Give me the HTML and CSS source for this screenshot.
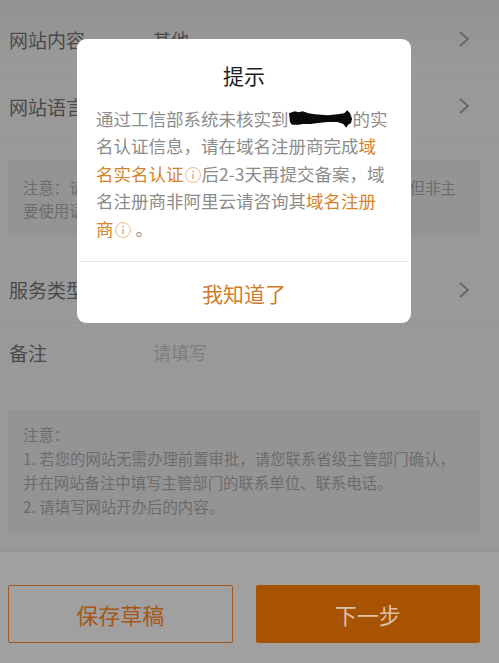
FILE: index.html
```html
<!DOCTYPE html>
<html lang="zh">
<head>
<meta charset="utf-8">
<title>提示</title>
<link rel="stylesheet" href="styles.css">
</head>
<body>
<div class="page">
  <main class="form">
    <div class="row row-first">
      <span class="label">网站内容</span><span class="value">其他</span>
      <svg class="chev" viewBox="0 0 12 18"><path d="M2 2l8 7-8 7"/></svg>
    </div>
    <div class="row">
      <span class="label">网站语言</span><span class="value"></span>
      <svg class="chev" viewBox="0 0 12 18"><path d="M2 2l8 7-8 7"/></svg>
    </div>
    <div class="note note-top">
      <p class="note-line"><span>注意：请</span><span>但非主</span></p>
      <p>要使用语</p>
    </div>
    <div class="row row-service">
      <span class="label">服务类型</span><span class="value"></span>
      <svg class="chev" viewBox="0 0 12 18"><path d="M2 2l8 7-8 7"/></svg>
    </div>
    <div class="row row-remark">
      <span class="label">备注</span><span class="value placeholder">请填写</span>
    </div>
    <div class="note note-bottom">
      <p>注意：</p>
      <p>1. 若您的网站无需办理前置审批，请您联系省级主管部门确认，</p>
      <p>并在网站备注中填写主管部门的联系单位、联系电话。</p>
      <p>2. 请填写网站开办后的内容。</p>
    </div>
  </main>
  <footer class="footer">
    <button class="btn btn-outline">保存草稿</button>
    <button class="btn btn-solid">下一步</button>
  </footer>
  <div class="dialog">
    <h1 class="dialog-title">提示</h1>
    <div class="dialog-body">
      <p class="line">通过工信部系统未核实到<svg class="scribble" viewBox="0 0 66 20"><path d="M0 3L6 1l4 1 4-1 6 2 7 1 13 1 10-1 7-1 3-3 3 3 2 6-1 4-3 2-2 3-3-4-6-2-10 0-10 1-8 1-8 0-4 1-7 0-2-3z"/></svg>的实</p>
      <p class="line">名认证信息，请在域名注册商完成<a class="link">域</a></p>
      <p class="line"><a class="link">名实名认证</a><svg class="info" viewBox="0 0 16 16"><circle cx="8" cy="8" r="7.4"/><path d="M8 7v5M8 3.8v1.6"/></svg>后2-3天再提交备案，域</p>
      <p class="line">名注册商非阿里云请咨询其<a class="link">域名注册</a></p>
      <p class="line"><a class="link">商</a><svg class="info" viewBox="0 0 16 16"><circle cx="8" cy="8" r="7.4"/><path d="M8 7v5M8 3.8v1.6"/></svg> 。</p>
    </div>
    <button class="dialog-action">我知道了</button>
  </div>
</div>
</body>
</html>
```
FILE: styles.css
```css
* { box-sizing: border-box; }
html, body { margin: 0; padding: 0; }
body {
  font-family: "Noto Sans CJK SC", "Liberation Sans", sans-serif;
  background: #9b9b9b;
}
p, h1 { margin: 0; font-weight: 400; }
.page {
  position: relative;
  width: 499px;
  height: 663px;
  overflow: hidden;
  display: flex;
  flex-direction: column;
  background: linear-gradient(#929292, #999 60px, #999);
}
.form { flex: 1; display: flex; flex-direction: column; }
.row {
  display: flex;
  align-items: center;
  height: 67px;
  padding: 0 29px 0 9px;
  border-bottom: 1px solid #959595;
  color: #4a4a4a;
  font-size: 19px;
}
.row-first { margin-top: 6px; }
.row-service { height: 66px; margin-top: 22px; }
.row-remark { height: 62px; padding-bottom: 4px; border-bottom: 0; }
.label { width: 144px; flex: none; }
.value { flex: 1; color: #4a4a4a; font-size: 18px; }
.placeholder { color: #7d7d7d; }
.chev { width: 12px; height: 18px; flex: none; }
.chev path { fill: none; stroke: #666; stroke-width: 1.8; }
.note {
  margin: 0 19px 0 8px;
  padding: 12px 15px;
  background: #949494;
  color: #6c6c6c;
  font-size: 15.4px;
  line-height: 24px;
}
.note-top { height: 75px; margin-top: 20px; padding: 16px 24px 0 15px; line-height: 23px; }
.note-line { display: flex; justify-content: space-between; }
.note-bottom { height: 122px; margin-top: 25px; }
.footer {
  display: grid;
  grid-template-columns: 1fr 1fr;
  gap: 23px;
  height: 113px;
  padding: 33px 19px 20px 8px;
  background: #a0a0a0;
  border-top: 2px solid #959595;
}
.btn {
  height: 58px;
  border-radius: 2px;
  font: inherit;
  font-size: 22px;
}
.btn-outline { background: transparent; border: 1.5px solid #a6571a; color: #a6571a; }
.btn-solid { background: #a85203; border: 0; color: #d9c2a8; }
.dialog {
  position: absolute;
  left: 77px;
  top: 39px;
  width: 334px;
  height: 284px;
  display: flex;
  flex-direction: column;
  background: #fff;
  border-radius: 9px;
}
.dialog-title {
  margin-top: 19px;
  text-align: center;
  font-size: 21px;
  line-height: 34px;
  color: #1d1d1d;
}
.dialog-body {
  margin-top: 13px;
  padding: 0 19px;
  height: 156px;
  font-size: 17.5px;
  line-height: 27.4px;
  color: #8c8c8c;
  white-space: nowrap;
}
.link { color: #d4842c; }
.scribble { width: 64px; height: 20px; vertical-align: -4px; }
.scribble path { fill: #0a0a0a; }
.info { width: 16px; height: 16px; margin: 0 1px; vertical-align: -2px; }
.info circle { fill: none; stroke: #e6b98a; stroke-width: 1; }
.info path { fill: none; stroke: #d9934a; stroke-width: 1.2; }
.dialog-action {
  flex: 1;
  background: none;
  border: 0;
  border-top: 1px solid #e6e6e6;
  margin: 0 3px;
  font: inherit;
  font-size: 21px;
  color: #d07c28;
}
```
